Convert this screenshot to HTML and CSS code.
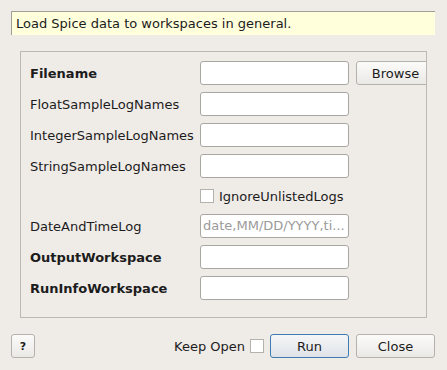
FILE: index.html
```html
<!DOCTYPE html>
<html>
<head>
<meta charset="utf-8">
<link rel="stylesheet" href="styles.css">
</head>
<body>
<div class="dialog">
  <div class="desc">Load Spice data to workspaces in general.</div>
  <div class="group">
    <div class="row">
      <span class="label bold">Filename</span>
      <span class="input"></span>
      <span class="btn browse">Browse</span>
    </div>
    <div class="row">
      <span class="label">FloatSampleLogNames</span>
      <span class="input"></span>
    </div>
    <div class="row">
      <span class="label">IntegerSampleLogNames</span>
      <span class="input"></span>
    </div>
    <div class="row">
      <span class="label">StringSampleLogNames</span>
      <span class="input"></span>
    </div>
    <div class="row check-row">
      <span class="label"></span>
      <span class="check"></span>
      <span class="check-label">IgnoreUnlistedLogs</span>
    </div>
    <div class="row">
      <span class="label">DateAndTimeLog</span>
      <span class="input placeholder">date,MM/DD/YYYY,ti...</span>
    </div>
    <div class="row">
      <span class="label bold">OutputWorkspace</span>
      <span class="input"></span>
    </div>
    <div class="row">
      <span class="label bold">RunInfoWorkspace</span>
      <span class="input"></span>
    </div>
  </div>
  <div class="footer">
    <span class="btn help">?</span>
    <span class="spacer"></span>
    <span class="keep">Keep Open</span>
    <span class="check keep-check"></span>
    <span class="btn run">Run</span>
    <span class="btn close">Close</span>
  </div>
</div>
</body>
</html>
```

FILE: styles.css
```css
html, body {
  margin: 0;
  padding: 0;
  background: #efebe7;
}
body {
  font-family: "DejaVu Sans", sans-serif;
  font-size: 13px;
  color: #1c1c1c;
  width: 447px;
  height: 370px;
  overflow: hidden;
}
.dialog {
  padding: 11px 12px 0 11px;
  display: flex;
  flex-direction: column;
}
.desc {
  height: 24px;
  box-sizing: border-box;
  background: #ffffdc;
  border-top: 1px solid #a09e9a;
  border-left: 1px solid #a09e9a;
  padding-left: 4px;
  line-height: 23px;
  white-space: nowrap;
}
.group {
  margin-top: 16px;
  margin-left: 9px;
  width: 407px;
  height: 267px;
  box-sizing: border-box;
  border: 1px solid #bcb8b3;
  padding: 9px 0 0 9px;
  overflow: hidden;
  display: flex;
  flex-direction: column;
  gap: 7px;
}
.row {
  display: flex;
  align-items: center;
  height: 24px;
  flex: none;
}
.check-row {
  height: 22px;
}
.label {
  width: 170px;
  flex: none;
  white-space: nowrap;
}
.bold {
  font-weight: bold;
}
.input {
  width: 149px;
  height: 24px;
  box-sizing: border-box;
  border: 1px solid #aaa7a3;
  border-radius: 3px;
  background: #fff;
  flex: none;
  overflow: hidden;
  white-space: nowrap;
  line-height: 22px;
  padding-left: 2px;
}
.placeholder {
  color: #9a9a9a;
}
.btn {
  display: flex;
  align-items: center;
  justify-content: center;
  height: 24px;
  box-sizing: border-box;
  border: 1px solid #b5b1ac;
  border-radius: 3px;
  background: linear-gradient(#fbfbfa, #ebe9e6);
  flex: none;
}
.browse {
  width: 79px;
  margin-left: 7px;
}
.check {
  width: 14px;
  height: 14px;
  box-sizing: border-box;
  border: 1px solid #b5b1ac;
  background: #fff;
  flex: none;
}
.check-label {
  margin-left: 5px;
  white-space: nowrap;
}
.footer {
  margin-top: 16px;
  display: flex;
  align-items: center;
  height: 24px;
}
.help {
  width: 24px;
  font-weight: bold;
  font-size: 11px;
}
.spacer {
  flex: 1;
}
.keep {
  white-space: nowrap;
}
.keep-check {
  margin-left: 5px;
  margin-right: 6px;
}
.run {
  width: 79px;
  border-color: #3d7bb0;
  background: linear-gradient(#f5f6f7, #dfe3e8);
}
.close {
  width: 79px;
  margin-left: 7px;
}
```
